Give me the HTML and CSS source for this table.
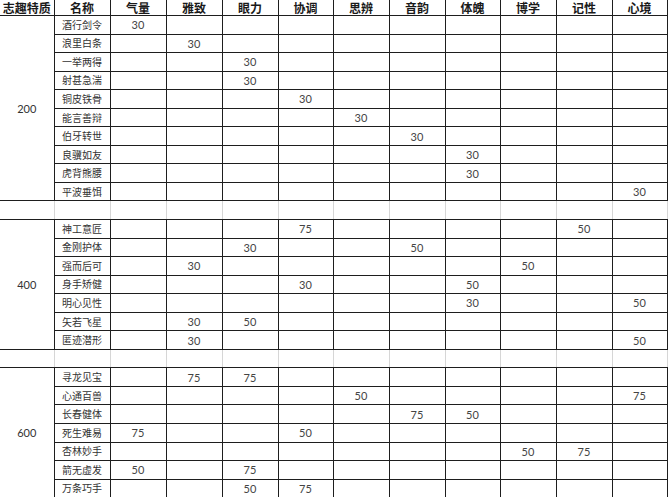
FILE: index.html
```html
<!DOCTYPE html>
<html lang="zh-CN">
<head>
<meta charset="utf-8">
<title>志趣特质</title>
<link rel="stylesheet" href="styles.css">
</head>
<body>
<table class="sheet">
  <colgroup>
    <col class="c-tier"><col class="c-name">
    <col class="c-a"><col class="c-a"><col class="c-a"><col class="c-b"><col class="c-a">
    <col class="c-a"><col class="c-b"><col class="c-a"><col class="c-a"><col class="c-b">
  </colgroup>
  <thead>
    <tr class="head">
      <th>志趣特质</th><th>名称</th><th>气量</th><th>雅致</th><th>眼力</th><th>协调</th><th>思辨</th><th>音韵</th><th>体魄</th><th>博学</th><th>记性</th><th>心境</th>
    </tr>
  </thead>
  <tbody>
    <tr><td class="tier" rowspan="10">200</td><td class="name">酒行剑令</td><td>30</td><td></td><td></td><td></td><td></td><td></td><td></td><td></td><td></td><td></td></tr>
    <tr><td class="name">浪里白条</td><td></td><td>30</td><td></td><td></td><td></td><td></td><td></td><td></td><td></td><td></td></tr>
    <tr><td class="name">一举两得</td><td></td><td></td><td>30</td><td></td><td></td><td></td><td></td><td></td><td></td><td></td></tr>
    <tr><td class="name">射甚急湍</td><td></td><td></td><td>30</td><td></td><td></td><td></td><td></td><td></td><td></td><td></td></tr>
    <tr><td class="name">铜皮铁骨</td><td></td><td></td><td></td><td>30</td><td></td><td></td><td></td><td></td><td></td><td></td></tr>
    <tr><td class="name">能言善辩</td><td></td><td></td><td></td><td></td><td>30</td><td></td><td></td><td></td><td></td><td></td></tr>
    <tr><td class="name">伯牙转世</td><td></td><td></td><td></td><td></td><td></td><td>30</td><td></td><td></td><td></td><td></td></tr>
    <tr><td class="name">良骥如友</td><td></td><td></td><td></td><td></td><td></td><td></td><td>30</td><td></td><td></td><td></td></tr>
    <tr><td class="name">虎背熊腰</td><td></td><td></td><td></td><td></td><td></td><td></td><td>30</td><td></td><td></td><td></td></tr>
    <tr><td class="name">平波垂饵</td><td></td><td></td><td></td><td></td><td></td><td></td><td></td><td></td><td></td><td>30</td></tr>
    <tr class="gap"><td></td><td></td><td></td><td></td><td></td><td></td><td></td><td></td><td></td><td></td><td></td><td></td></tr>
    <tr><td class="tier" rowspan="7">400</td><td class="name">神工意匠</td><td></td><td></td><td></td><td>75</td><td></td><td></td><td></td><td></td><td>50</td><td></td></tr>
    <tr><td class="name">金刚护体</td><td></td><td></td><td>30</td><td></td><td></td><td>50</td><td></td><td></td><td></td><td></td></tr>
    <tr><td class="name">强而后可</td><td></td><td>30</td><td></td><td></td><td></td><td></td><td></td><td>50</td><td></td><td></td></tr>
    <tr><td class="name">身手矫健</td><td></td><td></td><td></td><td>30</td><td></td><td></td><td>50</td><td></td><td></td><td></td></tr>
    <tr><td class="name">明心见性</td><td></td><td></td><td></td><td></td><td></td><td></td><td>30</td><td></td><td></td><td>50</td></tr>
    <tr><td class="name">矢若飞星</td><td></td><td>30</td><td>50</td><td></td><td></td><td></td><td></td><td></td><td></td><td></td></tr>
    <tr><td class="name">匿迹潜形</td><td></td><td>30</td><td></td><td></td><td></td><td></td><td></td><td></td><td></td><td>50</td></tr>
    <tr class="gap"><td></td><td></td><td></td><td></td><td></td><td></td><td></td><td></td><td></td><td></td><td></td><td></td></tr>
    <tr><td class="tier" rowspan="7">600</td><td class="name">寻龙见宝</td><td></td><td>75</td><td>75</td><td></td><td></td><td></td><td></td><td></td><td></td><td></td></tr>
    <tr><td class="name">心通百兽</td><td></td><td></td><td></td><td></td><td>50</td><td></td><td></td><td></td><td></td><td>75</td></tr>
    <tr><td class="name">长春健体</td><td></td><td></td><td></td><td></td><td></td><td>75</td><td>50</td><td></td><td></td><td></td></tr>
    <tr><td class="name">死生难易</td><td>75</td><td></td><td></td><td>50</td><td></td><td></td><td></td><td></td><td></td><td></td></tr>
    <tr><td class="name">杏林妙手</td><td></td><td></td><td></td><td></td><td></td><td></td><td></td><td>50</td><td>75</td><td></td></tr>
    <tr><td class="name">箭无虚发</td><td>50</td><td></td><td>75</td><td></td><td></td><td></td><td></td><td></td><td></td><td></td></tr>
    <tr><td class="name">万条巧手</td><td></td><td></td><td>50</td><td>75</td><td></td><td></td><td></td><td></td><td></td><td></td></tr>
  </tbody>
</table>
</body>
</html>
```
FILE: styles.css
```css
html, body {
  margin: 0;
  padding: 0;
  background: #ffffff;
  overflow: hidden;
}

.sheet {
  border-collapse: collapse;
  table-layout: fixed;
  width: 667px;
  font-family: Lato, "Noto Sans CJK SC", sans-serif;
  color: #3a3a3a;
}

.c-tier { width: 54px; }
.c-name { width: 56px; }
.c-a { width: 56px; }
.c-b { width: 55px; }

.sheet th,
.sheet td {
  border: 1px solid #1e1e1e;
  padding: 0;
  text-align: center;
  vertical-align: middle;
  line-height: 1;
  white-space: nowrap;
  overflow: hidden;
}

.sheet td {
  height: 17.56px;
  font-size: 11px;
  color: #444444;
}

.head th {
  height: 14px;
  font-family: "Noto Sans CJK SC", sans-serif;
  font-size: 12px;
  font-weight: 700;
  color: #1a1a1a;
  border-top: none;
  vertical-align: bottom;
  padding-bottom: 1px;
}

.head th:first-child {
  border-left: none;
}

.sheet td.name {
  font-family: "Noto Sans CJK SC", sans-serif;
  font-size: 10px;
  color: #333333;
}

.sheet td.tier {
  border-left: none;
  font-size: 11px;
  color: #333333;
}

.gap td {
  border-left: 1px solid #d6d6d6;
  border-right: 1px solid #d6d6d6;
}

.gap td:first-child {
  border-left: none;
}
```
